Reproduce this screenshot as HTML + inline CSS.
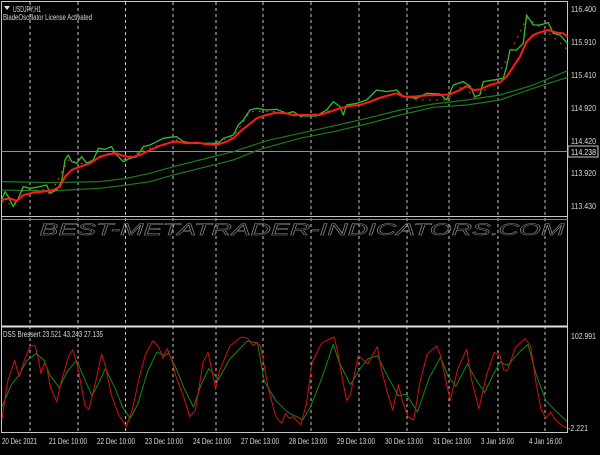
<!DOCTYPE html><html><head><meta charset="utf-8"><style>
html,body{margin:0;padding:0;background:#000;}
body{width:600px;height:450px;overflow:hidden;position:relative;font-family:"Liberation Sans",sans-serif;}
svg text{font-family:"Liberation Sans",sans-serif;}
</style></head><body>
<svg width="600" height="450" viewBox="0 0 600 450" xmlns="http://www.w3.org/2000/svg">
<rect width="600" height="450" fill="#000"/>
<g stroke="#c8c8c8" stroke-width="1" stroke-dasharray="3,3">
<line x1="30" y1="2" x2="30" y2="432"/><line x1="78" y1="2" x2="78" y2="432"/><line x1="125.5" y1="2" x2="125.5" y2="432"/><line x1="173" y1="2" x2="173" y2="432"/><line x1="216" y1="2" x2="216" y2="432"/><line x1="263" y1="2" x2="263" y2="432"/><line x1="311" y1="2" x2="311" y2="432"/><line x1="359" y1="2" x2="359" y2="432"/><line x1="407" y1="2" x2="407" y2="432"/><line x1="449" y1="2" x2="449" y2="432"/><line x1="498" y1="2" x2="498" y2="432"/><line x1="545" y1="2" x2="545" y2="432"/>
</g>
<g stroke="#c8c8c8" fill="none">
<rect x="1.5" y="1.5" width="566" height="431"/>
<line x1="1" y1="216.5" x2="568" y2="216.5"/>
<line x1="1" y1="219.5" x2="568" y2="219.5" stroke="#808080"/>
<line x1="1" y1="326.5" x2="568" y2="326.5" stroke="#e0e0e0" stroke-width="2"/>
<line x1="1" y1="151.5" x2="568" y2="151.5" stroke="#909090"/>
</g>
<text x="302" y="235" font-size="17" font-style="italic" fill="none" stroke="#8a8a8a" stroke-width="0.5" text-anchor="middle" textLength="525" lengthAdjust="spacingAndGlyphs">BEST-METATRADER-INDICATORS.COM</text>
<g fill="none" stroke-linejoin="round">
<g transform="scale(0.3333)">
<polyline vector-effect="non-scaling-stroke" stroke="#1c7a1c" stroke-width="1.2" points="5,545 150,548 300,545 380,535 450,520 520,500 600,480 700,455 800,422 900,400 1000,378 1100,355 1200,330 1300,312 1400,300 1500,285 1600,255 1703,212"/>
<polyline vector-effect="non-scaling-stroke" stroke="#1c7a1c" stroke-width="1.2" points="5,570 150,573 300,565 380,555 450,545 520,525 600,505 700,480 780,448 900,415 1000,395 1100,372 1200,345 1300,322 1400,315 1500,300 1600,265 1703,232"/>
<polyline vector-effect="non-scaling-stroke" stroke="#2fbf2f" stroke-width="1.3" points="5,600 15,575 25,590 40,620 55,595 70,560 90,565 120,560 140,555 150,580 170,570 185,545 195,480 205,465 215,485 230,490 245,470 260,490 280,480 295,445 315,448 335,440 345,460 360,475 370,485 390,475 410,470 430,440 450,435 470,425 490,415 510,412 530,410 550,425 580,430 620,430 655,430 670,415 700,405 715,375 730,360 750,330 770,325 800,330 830,328 860,340 880,335 900,348 920,348 950,348 980,330 1000,305 1020,320 1030,345 1040,315 1070,310 1100,300 1130,270 1160,275 1190,270 1210,290 1250,295 1280,280 1320,282 1340,300 1360,255 1390,245 1410,258 1425,290 1440,285 1450,245 1480,240 1510,235 1520,200 1530,150 1550,150 1570,130 1580,45 1590,60 1600,75 1620,75 1645,68 1660,100 1680,105 1703,130"/>
<polyline vector-effect="non-scaling-stroke" stroke="#d0501a" stroke-width="1" stroke-dasharray="2,5" points="5,605 40,615 70,570 140,570 150,585 205,480 260,495 335,455 370,480 430,450 530,420 620,435 700,410 750,335 830,335 900,352 1000,330 1100,310 1190,280 1250,300 1340,300 1390,255 1425,295 1480,250 1530,160 1580,55 1620,80 1660,110 1703,150"/>
<polyline vector-effect="non-scaling-stroke" stroke="#ff1a1a" stroke-width="2" points="5,600 30,595 50,603 70,585 100,578 130,575 160,570 180,560 195,530 215,510 240,500 270,490 300,470 330,462 350,460 370,468 395,472 420,465 450,450 480,437 510,428 530,425 560,430 590,428 620,432 650,435 680,425 700,415 720,395 745,375 770,355 800,345 830,338 860,340 880,345 900,345 930,345 960,345 990,335 1020,325 1050,318 1080,315 1110,305 1140,293 1170,285 1190,280 1210,290 1240,290 1280,286 1320,285 1350,283 1380,270 1400,258 1420,270 1440,268 1470,255 1500,247 1520,230 1540,200 1560,170 1580,125 1600,105 1620,97 1645,90 1670,98 1690,100 1703,110"/>
</g>
<g transform="translate(0,323.5) scale(0.3831,0.3216)">
<polyline vector-effect="non-scaling-stroke" stroke="#138a13" stroke-width="1" points="5,260 30,190 50,160 70,115 95,93 115,115 130,160 155,200 175,150 200,115 220,170 240,225 260,180 275,140 300,200 320,260 340,295 360,250 385,150 410,88 430,100 440,92 460,140 480,200 505,260 525,190 545,140 570,175 600,110 645,55 672,60 690,180 720,240 750,275 790,300 810,260 840,170 870,65 885,120 915,190 940,140 960,110 985,100 1010,160 1040,225 1060,220 1090,275 1120,170 1150,105 1170,165 1190,195 1220,125 1240,170 1265,215 1285,165 1305,120 1325,130 1355,90 1378,65 1400,160 1425,240 1445,265 1480,305"/>
<polyline vector-effect="non-scaling-stroke" stroke="#d41010" stroke-width="1" points="5,300 20,180 38,115 50,165 65,110 80,68 92,70 100,110 107,155 115,125 122,135 132,200 148,243 160,180 180,100 190,82 200,120 210,180 222,255 232,268 250,180 265,95 275,130 290,220 310,285 330,320 345,270 365,160 380,95 400,53 415,75 425,108 437,78 450,120 458,160 480,230 495,290 510,270 530,120 543,90 552,140 563,205 572,150 600,70 630,42 645,45 660,68 670,60 680,70 700,200 720,290 735,310 745,280 755,295 765,290 785,315 800,250 815,120 840,60 872,42 880,80 895,180 905,240 915,220 935,100 945,110 960,125 985,72 995,140 1010,210 1025,270 1040,190 1050,240 1065,290 1080,300 1095,190 1115,95 1140,70 1150,100 1175,240 1195,140 1218,80 1230,170 1250,265 1270,160 1290,90 1305,100 1315,145 1325,145 1345,75 1370,47 1385,70 1400,190 1412,265 1425,295 1437,275 1450,300 1470,320 1480,325"/>
</g>
</g>
<g font-size="8" fill="#d8d8d8">
<text x="571" y="12" textLength="25" lengthAdjust="spacingAndGlyphs">116.400</text><text x="571" y="45" textLength="25" lengthAdjust="spacingAndGlyphs">115.910</text><text x="571" y="78" textLength="25" lengthAdjust="spacingAndGlyphs">115.410</text><text x="571" y="111" textLength="25" lengthAdjust="spacingAndGlyphs">114.920</text><text x="571" y="144" textLength="25" lengthAdjust="spacingAndGlyphs">114.420</text><text x="571" y="176" textLength="25" lengthAdjust="spacingAndGlyphs">113.920</text><text x="571" y="209" textLength="25" lengthAdjust="spacingAndGlyphs">113.430</text>
<text x="571" y="339" textLength="25" lengthAdjust="spacingAndGlyphs">102.991</text><text x="568" y="431" textLength="20" lengthAdjust="spacingAndGlyphs">-2.221</text>
</g>
<rect x="568" y="146" width="30" height="11" fill="#000" stroke="#c8c8c8"/>
<text x="571" y="155" font-size="8" fill="#e8e8e8" textLength="25" lengthAdjust="spacingAndGlyphs">114.238</text>
<g font-size="8" fill="#d8d8d8">
<path d="M4 6 L10 6 L7 10 Z" fill="#e0e0e0"/>
<text x="13" y="12" textLength="28" lengthAdjust="spacingAndGlyphs">USDJPY,H1</text>
<text x="3" y="20" textLength="89" lengthAdjust="spacingAndGlyphs">BladeOscillator License Activated</text>
<text x="3" y="337" textLength="100" lengthAdjust="spacingAndGlyphs">DSS Bressert 23.521 43.243 27.135</text>
</g>
<g font-size="8" fill="#d8d8d8" lengthAdjust="spacingAndGlyphs">
<text x="2" y="444" textLength="35" lengthAdjust="spacingAndGlyphs">20 Dec 2021</text><text x="49" y="444" textLength="38" lengthAdjust="spacingAndGlyphs">21 Dec 10:00</text><text x="97" y="444" textLength="38" lengthAdjust="spacingAndGlyphs">22 Dec 10:00</text><text x="145" y="444" textLength="38" lengthAdjust="spacingAndGlyphs">23 Dec 10:00</text><text x="193" y="444" textLength="38" lengthAdjust="spacingAndGlyphs">24 Dec 10:00</text><text x="241" y="444" textLength="38" lengthAdjust="spacingAndGlyphs">27 Dec 13:00</text><text x="289" y="444" textLength="38" lengthAdjust="spacingAndGlyphs">28 Dec 13:00</text><text x="337" y="444" textLength="38" lengthAdjust="spacingAndGlyphs">29 Dec 13:00</text><text x="385" y="444" textLength="38" lengthAdjust="spacingAndGlyphs">30 Dec 13:00</text><text x="433" y="444" textLength="38" lengthAdjust="spacingAndGlyphs">31 Dec 13:00</text><text x="481" y="444" textLength="33" lengthAdjust="spacingAndGlyphs">3 Jan 16:00</text><text x="529" y="444" textLength="33" lengthAdjust="spacingAndGlyphs">4 Jan 16:00</text>
</g>
</svg>
</body></html>
